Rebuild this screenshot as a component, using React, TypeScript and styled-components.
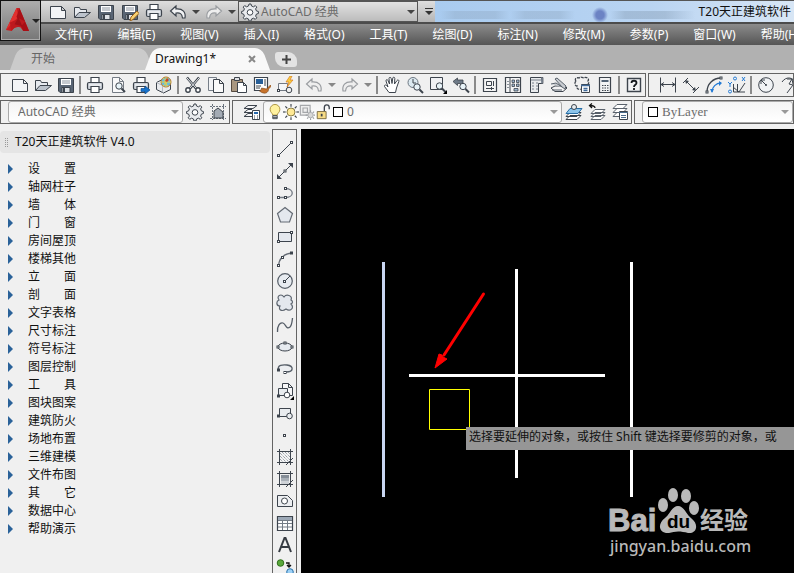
import React, { ReactNode } from 'react';
import styled, { createGlobalStyle } from 'styled-components';

const GlobalStyle = createGlobalStyle`
  * { box-sizing: border-box; }
  html, body, #root { margin: 0; height: 100%; }
  body { overflow: hidden; background: #f0f0f0; }
  body, button, select { font: 12px/18px "Noto Sans", "Noto Sans CJK SC", sans-serif; color: #111; }
  button { border: 0; padding: 0; background: none; }
`;

/* ---------- icons, all on an 18 unit grid ---------- */
const D = '#3d444d';
const F = '#e6e9ee';

const floppy = (
  <>
    <path d="M1.500 2.500h15v14H3l-1.500-1.500z" fill="#596574" stroke={D} />
    <path d="M4 3h10v6H4z" fill="#fff" />
    <path d="M5 5h8M5 7h8" stroke="#8b949f" />
    <path d="M5 11.500h8v5H5z" fill="#dfe3e8" stroke={D} />
    <path d="M7 12v4" stroke={D} strokeWidth="2" />
  </>
);
const printer = (
  <>
    <path d="M5 6V1.500h8V6" fill="#fff" stroke={D} strokeWidth="1.200" />
    <rect x="1.500" y="6.500" width="15" height="7" rx="1.500" fill="#cfd4db" stroke={D} strokeWidth="1.200" />
    <path d="M5 10.500h8v6H5z" fill="#fff" stroke={D} strokeWidth="1.200" />
    <path d="M3 9h12" stroke="#fff" />
  </>
);
const lens = (x: number, y: number) => (
  <>
    <circle cx={x} cy={y} r="3.200" fill="#e8f3f8" stroke={D} />
    <path d={`M${x + 2.5} ${y + 2.5}l3.500 3.500`} stroke={D} strokeWidth="2" />
  </>
);
const undoShape = 'M7 3L1.500 8l5.500 5v-3c4-.5 6 .5 6.500 5h2.500c1-6-2-9.500-9-9z';
const node = (x: number, y: number) => (
  <rect x={x - 1} y={y - 1} width="2" height="2" fill="#fff" stroke={D} />
);
const turns = [0, 45, 90, 135, 180, 225, 270, 315];
const hatchFrame = 'M3.500 1v16M14.500 1v16M1 3.500h16M1 14.500h16';

const icons: Record<string, ReactNode> = {
  new: <path d="M1.500 3.500h11l4 4v8h-15zM12.500 3.500v4h4" fill="#f3f4f6" stroke={D} />,
  open: (
    <>
      <path d="M1.500 14.500v-10h5l1 2h6v3" fill={F} stroke={D} />
      <path d="M1.500 14.500L6 9.500h11.500l-6 5z" fill="#bcc3cc" stroke={D} />
    </>
  ),
  save: floppy,
  saveAs: (
    <>
      {floppy}
      <path d="M9 18l1-4 6-6 2 2.500-6 6z" fill="#f8d070" stroke="#9b6420" />
    </>
  ),
  print: printer,
  preview: (
    <>
      <path d="M3.500 1.500h7l4 4v11h-11zM10.500 1.500v4h4" fill="#f8f8f9" stroke="#747b84" />
      {lens(10, 10)}
    </>
  ),
  plot: (
    <>
      {printer}
      <path d="M9 12.500h4V10l5 4-5 4v-2.500H9z" fill="#1773cc" stroke="#0b4c92" strokeWidth=".7" />
    </>
  ),
  cube: (
    <>
      <path d="M1.500 6.500l6-3 8 4v6l-7 3.500-7-3.500z" fill="#e8eaed" stroke={D} />
      <path d="M1.500 6.500l6 3v7" fill="none" stroke="#b5bac1" />
      <circle cx="11" cy="6" r="5" fill="#64bce0" stroke="#c07a27" />
      <path d="M11 1v10M6 6h10M8 2c3 2 3 6 0 8M13 2c-3 2-3 6 0 8" stroke="#e9cf45" fill="none" />
      <path d="M12 2l2 2-2 2-2-1z" fill="#c9432a" />
    </>
  ),
  cut: (
    <>
      <path d="M3 1.500l9 11M15 1.500l-9 11" stroke={D} strokeWidth="2.500" />
      <path d="M3 2l9 10M15 2L6 12" stroke="#e8ebef" />
      <circle cx="4" cy="14" r="2.200" fill="#fff" stroke={D} strokeWidth="1.400" />
      <circle cx="14" cy="14" r="2.200" fill="#fff" stroke={D} strokeWidth="1.400" />
    </>
  ),
  copy: (
    <>
      <path d="M1.500 1.500h8v13h-8z" fill="#f2f3f5" stroke="#767e88" />
      <path d="M6.500 3.500h6l4 4v9h-10zM12.500 3.500v4h4" fill="#fafafa" stroke={D} />
    </>
  ),
  paste: (
    <>
      <path d="M1.500 3.500h11v12h-11z" fill="#a99780" stroke="#54493f" />
      <path d="M4.500 1.500h5v3h-5z" fill="#dedfe2" stroke={D} />
      <path d="M7.500 6.500h6l3 3v7h-9zM13.500 6.500v3h3" fill="#fff" stroke={D} />
    </>
  ),
  match: (
    <>
      <path d="M1.500 1.500h13v13h-13z" fill="#fff" stroke={D} strokeWidth="1.200" />
      <path d="M3 3h7v5H3z" fill="#285f98" />
      <path d="M12 3v7M3 10h5M3 12h4" stroke={D} />
      <path d="M17.500 9l-4 4-5-1c0 2-1 2-2 3 5 4 9 2 9-2l3-3z" fill="#c8732b" stroke="#754013" strokeWidth=".6" />
    </>
  ),
  block: (
    <>
      <path d="M2.500 7.500h9v7h-9z" fill="#f4f6f8" stroke="#727983" />
      {node(2.5, 14.5)}
      <circle cx="13" cy="14" r="2.800" fill="#eee" stroke={D} />
      <path d="M14 0l-4 6h3l-2 5 6-7h-3l2-4z" fill="#f8cf40" stroke="#d87a1e" strokeWidth=".7" />
    </>
  ),
  undo: <path d={undoShape} fill="#f1f2f4" stroke={D} strokeWidth="1.200" />,
  undoPale: <path d={undoShape} fill="#eee" stroke="#9a9da1" strokeWidth="1.200" />,
  redoPale: <path d={undoShape} transform="matrix(-1 0 0 1 18 0)" fill="#eee" stroke="#9a9da1" strokeWidth="1.200" />,
  pan: (
    <path
      d="M6 16.500l-4.500-6c-.5-1.500 1-2 2-1l1.500 1.500L3 5c-.3-1.500 1.500-2 2-.5L6.500 8 6 2.500c0-1.500 2-1.500 2.200 0L9 7.500l.8-5.500c.3-1.300 2-1 2 .4L11.500 8 14 4.500c.8-1.200 2.400-.4 1.800 1L13.500 12l-1 4.500z"
      fill="#fff"
      stroke={D}
    />
  ),
  zoom: (
    <>
      <circle cx="7" cy="6.500" r="5" fill="#dce9f0" stroke="#6e7882" />
      <path d="M7 3v4h3" fill="none" stroke={D} />
      {lens(11, 11)}
    </>
  ),
  zoomWin: (
    <>
      <path d="M1.500 1.500h12v12h-12z" fill="#f0f1f4" stroke={D} />
      {lens(10.5, 10)}
      <path d="M18 14v4h-4z" fill="#000" />
    </>
  ),
  zoomPrev: (
    <>
      <path d="M1 5.500L5.500 2v2H11v3.500H5.500v2z" fill="#6d7986" stroke={D} strokeWidth=".8" />
      {lens(11, 10.5)}
    </>
  ),
  props: (
    <>
      <path d="M2.500 2.500h13v13h-13z" fill="#f4f4f4" stroke={D} strokeWidth="1.200" />
      <path d="M5.500 5.500h5v4h-5zM12.500 5v5M5 12.500h8M10.500 11v3" fill="none" stroke={D} />
    </>
  ),
  center: (
    <>
      <path d="M1.500 1.500h15v15h-15z" fill="#f5f5f6" stroke={D} strokeWidth="1.200" />
      <path d="M6 2v14" stroke={D} />
      <path d="M3 5.500h2M3 8.500h2M3 11.500h2" stroke="#8b929b" />
      <path d="M8 4h2.500v2.500H8zM12.500 4H15v2.500h-2.500zM8 8h2.500v2.500H8zM12.500 8H15v2.500h-2.500zM10 12.500h4V15h-4z" fill="#9eb6d0" stroke={D} strokeWidth=".8" />
    </>
  ),
  palette: (
    <>
      <path d="M3.500 1.500h11v6h-3v9h-8z" fill="#e9ebed" stroke={D} />
      <path d="M4 4h10M5 7h2m2 0h2M5 10h2m2 0h2M5 13h2m2 0h2" stroke="#777f89" />
      <path d="M14.500 1.500H16v6h-2" fill="#909aa6" stroke={D} strokeWidth=".7" />
    </>
  ),
  sheet: (
    <>
      <path d="M1 12l4-2h10l2 2-4 3.500H5z" fill="#f3f3f4" stroke={D} />
      <path d="M1 8l5-1 6 4M5 3l2-1 9 8-1 3-3-2zM2 14h10" fill="#c8ccd1" stroke="#59626c" />
    </>
  ),
  markup: (
    <>
      <path d="M3 5c-2-2 1-4 3-3 2-2 4 0 5 0 2-2 6 1 4 3 1 1 1 2 0 3M3 5c-2 2-1 5 1 5-1 3 2 4 4 3" fill="none" stroke={D} strokeWidth="1.300" strokeDasharray="3 1" />
      <path d="M8.500 8.500h8v8h-8z" fill="#fff" stroke={D} />
      <path d="M8 9.500h9M10.500 12.500h4M10.500 14.500h4" stroke="#416b9b" strokeWidth="1.300" />
    </>
  ),
  calc: (
    <>
      <path d="M3.500 1.500h11v15h-11z" fill="#f2f3f4" stroke={D} strokeWidth="1.200" />
      <path d="M5.500 4h7v2h-7z" fill="#516173" />
      <path d="M6 9.500h1.500m1 0H10m1 0h1.500M6 12h1.500m1 0H10m1 0h1.500M6 14.500h1.500m1 0H10m1 0h1.500" stroke={D} strokeWidth="1.200" />
    </>
  ),
  help: (
    <>
      <path d="M2.500 2.500h13v13h-13z" fill="#f0f2f4" stroke={D} strokeWidth="1.400" />
      <path d="M6.500 7C6.500 4 11.500 4 11.500 7c0 2-2.500 1.500-2.500 4M9 12v2" fill="none" stroke="#15191e" strokeWidth="1.800" />
    </>
  ),
  dimLinear: (
    <path d="M1.500 1.500v15M16.500 1.500v15M2 8.500h14M5 6.500l-3 2 3 2M13 6.500l3 2-3 2" fill="none" stroke={D} />
  ),
  dimAligned: (
    <>
      <path d="M3.500 4.500l10 10M1 7l5-5M11 17l6-6" fill="none" stroke={D} />
      <path d="M3 4l4 1-3 3zM14 15l-4-1 3-3z" fill={D} />
    </>
  ),
  dimArc: (
    <>
      <path d="M2 16C2 8 8 2 16 2" fill="none" stroke={D} strokeWidth="1.300" />
      <path d="M7 16c0-5 4-9 9-9" fill="none" stroke="#247bd5" strokeWidth="1.300" />
      <path d="M5 13l2 4 2-4zM14 5l3 2-3 3z" fill="#247bd5" />
      {node(2, 16)}
      {node(16, 2)}
    </>
  ),
  ordinate: (
    <>
      <path d="M5.500 8v8H17M9.500 8v8M5 11l6 5 6-9" fill="none" stroke={D} />
      <circle cx="7" cy="2.500" r="1.500" fill="none" stroke="#247bd5" />
      <circle cx="2" cy="15.500" r="1.500" fill="none" stroke="#247bd5" />
      <path d="M14 1l3 4m0-4l-3 4M0 6l2 2 2-2M2 8v3" fill="none" stroke="#247bd5" />
    </>
  ),
  radius: (
    <>
      <circle cx="9" cy="9" r="7.300" fill="#f1f3f5" stroke={D} />
      <path d="M4 4l5 5M4 4v4M4 4h4" fill="none" stroke={D} />
      <circle cx="9" cy="9" r="1" fill={D} />
    </>
  ),
  jogged: <path d="M2 6c4-6 11-5 14 1M12 3l-3 5 4 1-6 8M7 3l5 0 1 5" fill="none" stroke={D} />,
  gear: (
    <g fill="#e9ebee" stroke={D}>
      <path d="M7.500 3l.5-2h2l.5 2 2 .8 1.800-1.200 1.500 1.500-1.200 1.800.8 2 2 .6v2l-2 .6-.8 2 1.200 1.700-1.500 1.500-1.800-1.100-2 .8-.5 2H8l-.5-2-2-.8-1.800 1.100-1.500-1.500 1.200-1.700-.8-2-2-.6v-2l2-.6.8-2-1.200-1.800 1.500-1.500 1.800 1.200z" />
      <circle cx="9" cy="9.400" r="2.800" fill="#fff" />
    </g>
  ),
  wcs: (
    <>
      <path d="M3.500 1v16M14.500 1v16M1 3.500h16M1 15.500h16" stroke="#68717c" strokeDasharray="2 1" />
      <path d="M5 15V8l4-3 5 4v6z" fill="#a3abb5" stroke={D} />
    </>
  ),
  layerProps: (
    <>
      <path d="M5 2.500h9l-4 3H1zM9 9.500H1l4-3h4M9 13.500H1l4-3h4" fill="#f7f7f8" stroke={D} />
      <path d="M9.500 7.500h7v9h-7z" fill="#fff" stroke={D} />
      <path d="M11 9h4v2h-4z" fill="#2869ad" />
      <path d="M11 13h1m2 0h1m-4 2h1m2 0h1" stroke={D} />
    </>
  ),
  layerCur: (
    <>
      <path d="M5 12.500h11l-4 4H1zM5 9.500h11l-4 4H1z" fill="#fff" stroke={D} />
      <path d="M5 5.500h12l-4 5H1z" fill="#8cc4ea" stroke="#266da5" />
      <circle cx="9" cy="4" r="2.500" fill="#e8edf1" stroke={D} />
    </>
  ),
  layerPrev: (
    <>
      <path d="M7 12.500h10l-4 4H3zM7 9.500h10l-4 4H3zM7 6.500h10l-4 4H3z" fill="#fff" stroke="#59616b" />
      <path d="M7 5c0-2-2-2.500-5-2.500M4 .5l-2.500 2L4 5" fill="none" stroke="#111" strokeWidth="1.300" />
    </>
  ),
  layerState: (
    <>
      <path d="M6 9.500h10l-4 4H2zM6 5.500h10l-4 4H2zM6 1.500h10l-4 4H2z" fill="#fff" stroke="#59616b" />
      <path d="M8.500 8.500h8v8h-8z" fill="#fff" stroke={D} />
      <path d="M8 9.500h9M10 12.500h5M10 14.500h5" stroke="#496b8c" strokeWidth="1.200" />
    </>
  ),
  bulb: (
    <>
      <path d="M6.500 12.500c0-2-3-3-3-6.500a5.500 5.500 0 0111 0c0 3.500-3 4.500-3 6.500z" fill="#fff2a0" stroke="#a68c36" />
      <path d="M6.500 13h5v3.500h-5zM6.500 15h5" fill="#d2d5d9" stroke={D} />
    </>
  ),
  sun: (
    <>
      {turns.map((a) => (
        <path key={a} d="M9 0v3" transform={`rotate(${a} 9 9)`} stroke={D} strokeWidth="1.300" />
      ))}
      <circle cx="9" cy="9" r="4.500" fill="#ffe995" stroke="#7b6f38" />
    </>
  ),
  vpFreeze: (
    <>
      <path d="M1.500 1.500h11v11h-11zM4.500 4.500h5v5h-5z" fill="#eee" stroke="#a5a7aa" strokeWidth="1.300" />
      {turns.map((a) => (
        <path key={a} d="M13 7v2" transform={`rotate(${a} 13 12.500)`} stroke="#999da0" strokeWidth="1.300" />
      ))}
      <circle cx="13" cy="12.500" r="3" fill="#d8d8d8" stroke="#a5a7aa" />
    </>
  ),
  lock: (
    <>
      <path d="M10.500 8V4c0-4 5.500-4 5.500 0v2" fill="none" stroke={D} strokeWidth="1.500" />
      <path d="M2.500 8.500h10v8h-10z" fill="#f7dc86" stroke="#74643b" />
      <path d="M7.500 11v3" stroke={D} strokeWidth="2" />
    </>
  ),
  line: <><path d="M2 16L16 2" stroke={D} />{node(2.5, 15.5)}{node(15.5, 2.5)}</>,
  xline: (
    <>
      <path d="M3 15L15 3" stroke={D} />
      <path d="M1 17v-5l5 5zM17 1v5l-5-5z" fill={D} />
      {node(9, 9)}
    </>
  ),
  pline: (
    <>
      <path d="M2.500 13.500h7c9 0 9-9 0-9" fill="none" stroke="#727983" strokeWidth="1.300" />
      {node(2.5, 13.5)}{node(9.5, 13.5)}{node(9.5, 4.5)}
    </>
  ),
  polygon: <path d="M9 1.500l7.500 6-3 8.500h-9l-3-8.500z" fill="#e4e8ee" stroke="#646b74" strokeWidth="1.200" />,
  rect: <><path d="M2.500 4.500h13v9h-13z" fill="#e4e8ee" stroke={D} />{node(2.5, 13.5)}{node(15.5, 4.5)}</>,
  arc: (
    <>
      <path d="M2.500 16C3 9 7 4 16 3" fill="none" stroke="#646b74" strokeWidth="1.300" />
      {node(2.5, 15.5)}{node(6.5, 7.5)}{node(15.5, 3)}
    </>
  ),
  circle: (
    <>
      <circle cx="9" cy="9" r="7.300" fill="#e7ebf0" stroke="#555d67" strokeWidth="1.200" />
      <path d="M9 9l5-5" stroke={D} />{node(8.5, 9.5)}
    </>
  ),
  cloud: (
    <path d="M3 6C0 2 5-1 8 3c2-3 9-2 7 3 2 1 2 3 0 4 4 4-1 8-5 5-4 3-8 1-6-3C0 12 0 7 3 6z" fill="#e4e8ee" stroke="#5e6670" strokeWidth="1.200" />
  ),
  spline: <path d="M1.500 16C1 10 4 6 7 7s3 7 7 4c2-2 2-5 2.500-9" fill="none" stroke="#555d67" strokeWidth="1.300" />,
  ellipse: <><ellipse cx="9" cy="9" rx="7" ry="4" fill="#e7ebf0" stroke={D} />{node(2, 9)}{node(16, 9)}{node(9, 5)}</>,
  ellArc: (
    <>
      <path d="M2.500 10C1 5 7 4.500 11 5c7 1 7 7-1 7" fill="#eceef1" stroke="#555d67" strokeWidth="1.300" />
      {node(2.5, 10)}{node(9, 12.5)}
    </>
  ),
  insert: (
    <>
      <path d="M6.500 7V1.500h6l4 4v8h-3zM12.500 1.500v4h4" fill="#f7f7f8" stroke={D} />
      <path d="M2.500 6.500h9v7h-9z" fill="#e9ecef" stroke={D} />
      {node(2.5, 14)}
      <circle cx="11" cy="13" r="2.800" fill="#fff" stroke={D} />
      <path d="M18 14v4h-4z" fill="#000" />
    </>
  ),
  make: (
    <>
      <path d="M3.500 4.500h11v8h-11z" fill="#e9ecef" stroke={D} />
      {node(2.5, 12)}
      <circle cx="13.500" cy="12" r="2.800" fill="#e9ecef" stroke={D} />
    </>
  ),
  point: node(8.5, 9.5),
  hatch: (
    <>
      <path d="M4 4h10v10H4z" fill="#f4f5f6" />
      <path d="M4 11l3 3M4 8l6 6M4 5l9 9M6 4l8 8M9 4l5 5M12 4l2 2" stroke="#747c86" strokeDasharray="1 1" />
      <path d={hatchFrame} stroke={D} />
      <path d="M10 17l7-7" stroke={D} />
    </>
  ),
  gradient: (
    <>
      <path d="M5 5h8v3H5z" fill="#868e98" />
      <path d="M5 8h8v3H5z" fill="#a9b0b8" />
      <path d="M5 11h8v3H5z" fill="#ced2d7" />
      <path d={hatchFrame} stroke={D} />
      <path d="M10 17l7-7" stroke={D} />
    </>
  ),
  region: (
    <>
      <path d="M1.500 3.500h10l5 5v6h-15z" fill="#eceef1" stroke={D} />
      <circle cx="8.500" cy="9" r="3" fill="#fff" stroke={D} />
    </>
  ),
  table: (
    <>
      <path d="M1.500 2.500h15v14h-15z" fill="#fff" stroke={D} strokeWidth="1.200" />
      <path d="M2 3h14v3H2z" fill="#9ca8b6" />
      <path d="M2 6.500h14M2 9.500h14M2 13h14M6.500 6v10M11.500 6v10" stroke="#747c86" />
    </>
  ),
  mtext: <path d="M3 16L8.500 2h1L15 16M5.500 11h7" fill="none" stroke="#363b42" strokeWidth="2" />,
  addSel: (
    <>
      <circle cx="4.500" cy="5" r="3.300" fill="#59a83b" stroke="#2f6f1c" />
      <path d="M10 5h3v4m-2-2l2 2 2-2" fill="none" stroke="#111" strokeWidth="1.300" />
      <circle cx="14" cy="14" r="3.300" fill="#9dd0f5" stroke="#2672ad" />
    </>
  ),
};

const Glyph = styled.svg<{ $size?: number }>`
  display: block;
  flex: none;
  width: ${(p) => p.$size ?? 18}px;
  height: ${(p) => p.$size ?? 18}px;
`;
const Icon = ({ name, size }: { name: string; size?: number }) => (
  <Glyph viewBox="0 0 18 18" $size={size} aria-hidden="true">{icons[name]}</Glyph>
);

const Caret = styled.span<{ $c?: string }>`
  flex: none;
  border: 4px solid transparent;
  border-top-color: ${(p) => p.$c ?? '#444'};
  border-bottom: 0;
`;

/* ---------- page ---------- */
const Page = styled.div`
  display: flex;
  flex-direction: column;
  height: 100vh;
  overflow: hidden;
`;
const Header = styled.header`
  display: flex;
  flex: none;
  height: 45px;
  background: linear-gradient(#8c8c8c 24px, #555 45px);
`;
const AppButton = styled.button`
  display: flex;
  align-items: center;
  flex: none;
  gap: 2px;
  width: 41px;
  height: 41px;
  padding-left: 4px;
  border: 1px solid #111;
  background: linear-gradient(#adadad, #777);
  box-shadow: inset 0 0 0 1px #aaa;
`;
const HeaderRows = styled.div`
  flex: 1;
  min-width: 0;
`;
const TitleBar = styled.div`
  display: flex;
  height: 24px;
  border-top: 1px solid #555;
  border-bottom: 2px solid #4c4c4c;
  background: #b9cfe7;
`;
const QuickAccess = styled.div`
  display: flex;
  align-items: center;
  flex: none;
  padding-left: 5px;
  background: linear-gradient(#dedede, #b5b5b5);
`;
const ToolButton = styled.button<{ $w?: number }>`
  display: flex;
  align-items: center;
  justify-content: center;
  flex: none;
  width: ${(p) => p.$w ?? 23}px;
  height: 22px;
`;
const QuickCombo = styled.div`
  display: flex;
  align-items: center;
  width: 180px;
  height: 21px;
  padding: 0 2px;
  border: 1px solid #555;
  background: linear-gradient(#e2e2e2, #bcbcbc);
`;
const Select = styled.select<{ $pad?: number }>`
  flex: 1;
  min-width: 0;
  height: 18px;
  padding: 0 ${(p) => p.$pad ?? 2}px;
  border: 0;
  outline: 0;
  appearance: none;
  background: none;
  color: #6b6b6b;
`;
const Glass = styled.div`
  display: flex;
  align-items: center;
  justify-content: flex-end;
  flex: 1;
  min-width: 0;
  overflow: hidden;
  background:
    radial-gradient(circle at 165px 14px, #6c83c4 4px, transparent 8px),
    linear-gradient(90deg, transparent 5px, #8fa8c266 20px 60px, transparent 75px, #8fa8c266 90px 125px, transparent 140px 175px, #8399b066 190px 230px, transparent 260px) 0 10px / 100% 8px no-repeat,
    linear-gradient(90deg, #a9cbef, #b9d4f2 60%, #d8e6f5);
`;
const Title = styled.h1`
  margin: 0;
  padding-right: 3px;
  font-size: 12px;
  font-weight: 400;
  line-height: 20px;
  white-space: nowrap;
`;
const MenuBar = styled.nav`
  display: flex;
  gap: 1px;
  height: 21px;
  padding-left: 2px;
  overflow: hidden;
`;
const MenuButton = styled.button`
  flex: none;
  padding: 0 12px;
  color: #fff;
  line-height: 21px;
`;
const Tabs = styled.div`
  display: flex;
  align-items: flex-end;
  flex: none;
  height: 25px;
  padding-left: 14px;
  background: #b1b1b1;
`;
const Tab = styled.button<{ $active?: boolean }>`
  position: relative;
  z-index: ${(p) => (p.$active ? 1 : 0)};
  display: flex;
  align-items: center;
  justify-content: space-between;
  width: ${(p) => (p.$active ? 117 : 135)}px;
  height: 22px;
  padding: ${(p) => (p.$active ? '0 10px 0 6px' : '0 17px')};
  color: ${(p) => (p.$active ? '#111' : '#666')};

  &::before, &::after {
    content: "";
    position: absolute;
    z-index: -1;
    top: 0;
    bottom: 0;
    background: ${(p) => (p.$active ? '#f8f8f8' : '#cbcbcb')};
  }
  &::before { left: 0; right: 40%; transform: skewX(-20deg); border-radius: 7px 0 0 0; }
  &::after { right: 0; left: 40%; transform: skewX(20deg); border-radius: 0 7px 0 0; }
`;
const AddTab = styled.button`
  display: flex;
  align-items: center;
  justify-content: center;
  width: 22px;
  height: 15px;
  margin: 0 0 3px 9px;
  border-radius: 3px 9px 3px 9px;
  background: #e3e3e3;
`;
const ToolRow = styled.div`
  display: flex;
  flex: none;
  gap: 2px;
  height: 24px;
  margin-top: 3px;
`;
const ToolGroup = styled.div<{ $grow?: boolean }>`
  display: flex;
  align-items: center;
  flex: ${(p) => (p.$grow ? '1 0 0' : 'none')};
  min-width: 0;
  padding-left: 7px;
  overflow: hidden;
  border: 1px solid #646464;
`;
const Separator = styled.span`
  flex: none;
  width: 2px;
  height: 18px;
  margin: 0 2px;
  background: #8a8a8a;
`;
const Combo = styled.div<{ $w?: number }>`
  display: flex;
  align-items: center;
  flex: ${(p) => (p.$w ? 'none' : '1')};
  width: ${(p) => (p.$w ? `${p.$w}px` : 'auto')};
  height: 22px;
  padding: 0 3px;
  border: 1px solid #a9a9a9;
  border-radius: 3px;
  background: linear-gradient(#f4f4f4, #fff);
`;
const ColorSelect = styled(Select)`
  font-family: "Liberation Serif", serif;
  font-size: 13px;
`;
const Swatch = styled.span`
  flex: none;
  width: 10px;
  height: 10px;
  margin: 0 2px;
  border: 1px solid #000;
  background: #fff;
`;
const Work = styled.div`
  display: flex;
  flex: 1;
  min-height: 0;
  margin-top: 5px;
`;
const Sidebar = styled.aside`
  width: 270px;
  flex: none;
  padding-top: 2px;
`;
const PanelTitle = styled.h2`
  display: flex;
  align-items: center;
  gap: 6px;
  height: 22px;
  margin: 0 0 7px;
  padding-left: 5px;
  border-radius: 4px;
  background: #e5e5e5;
  font-size: 12px;
  font-weight: 400;
`;
const Grip = styled.span`
  width: 4px;
  height: 10px;
  background: repeating-linear-gradient(#e5e5e5 0 1px, transparent 1px 2px), repeating-linear-gradient(90deg, #999 0 1px, transparent 1px 2px);
`;
const Tree = styled.ul`
  margin: 0;
  padding: 0;
  list-style: none;
`;
const TreeButton = styled.button`
  display: flex;
  align-items: center;
  gap: 15px;
  width: 100%;
  height: 18px;
  padding-left: 8px;
  text-align: left;

  &::before {
    content: "";
    border: 5px solid transparent;
    border-left-color: #2a6299;
    border-right-width: 0;
  }
`;
const DrawTools = styled.div`
  flex: none;
  width: 25px;
  margin: 0 4px 0 2px;
  padding-top: 8px;
  overflow: hidden;
  border: 1px solid #646464;
  border-bottom: 0;
`;
const Canvas = styled.main`
  position: relative;
  flex: 1;
  min-width: 0;
  overflow: hidden;
  background: #000;
`;
const Drawing = styled.svg`
  display: block;
  width: 493px;
  height: 444px;
`;
const Prompt = styled.div`
  position: absolute;
  top: 298px;
  left: 165px;
  right: 0;
  height: 23px;
  padding-left: 3px;
  overflow: hidden;
  background: #969696;
  line-height: 20px;
  white-space: nowrap;
`;
const Watermark = styled.svg`
  position: absolute;
  right: 40px;
  bottom: 9px;
  width: 148px;
  height: 76px;
`;

const mainTools = [
  'new', 'open', 'save', '|', 'print', 'preview', 'plot', 'cube', '|', 'cut', 'copy', 'paste', 'match', 'block', '|',
  'undoPale', 'v', 'redoPale', 'v', '|', 'pan', 'zoom', 'zoomWin', 'zoomPrev', '|',
  'props', 'center', 'palette', 'sheet', 'markup', 'calc', '|', 'help',
];
const dimTools = ['dimLinear', 'dimAligned', 'dimArc', 'ordinate', '|', 'radius', 'jogged'];
const quickTools = ['new', 'open', 'save', 'saveAs', 'print', 'undo', 'v', 'redoPale', 'v'];
const drawTools = [
  'line', 'xline', 'pline', 'polygon', 'rect', 'arc', 'circle', 'cloud', 'spline', 'ellipse', 'ellArc',
  'insert', 'make', 'point', 'hatch', 'gradient', 'region', 'table', 'mtext', 'addSel',
];
const menus = [
  '文件(F)', '编辑(E)', '视图(V)', '插入(I)', '格式(O)', '工具(T)', '绘图(D)', '标注(N)', '修改(M)', '参数(P)', '窗口(W)', '帮助(H)',
];
const tree = [
  '设　　置', '轴网柱子', '墙　　体', '门　　窗', '房间屋顶', '楼梯其他', '立　　面', '剖　　面', '文字表格', '尺寸标注', '符号标注',
  '图层控制', '工　　具', '图块图案', '建筑防火', '场地布置', '三维建模', '文件布图', '其　　它', '数据中心', '帮助演示',
];

const Tools = ({ items, w, pale }: { items: string[]; w?: number; pale?: boolean }) => (
  <>
    {items.map((t, i) => {
      if (t === '|') return <Separator key={i} />;
      if (t === 'v') {
        return (
          <ToolButton key={i} $w={pale ? 13 : 12} aria-label={`${items[i - 1]} list`}>
            <Caret $c={pale ? '#888' : '#444'} />
          </ToolButton>
        );
      }
      return (
        <ToolButton key={i} $w={w} aria-label={t}>
          <Icon name={t} />
        </ToolButton>
      );
    })}
  </>
);

export default function App() {
  return (
    <Page>
      <GlobalStyle />
      <Header>
        <AppButton aria-label="AutoCAD">
          <Glyph viewBox="0 0 24 26" $size={25} aria-hidden="true">
            <path d="M11 0h3l10 24h-6l-3-4c-4-1-7 0-9 4l-6-1z" fill="#c71e20" />
            <path d="M11 0l2 9L0 23z" fill="#e2302f" />
            <path d="M14 0l10 24h-6L11 9z" fill="#a80f16" />
            <path d="M4 15l10-4 6 3-5 6c-4-1-7 0-9 4z" fill="#bd191e" />
            <path d="M9 17l4-7 4 9z" fill="#9e1117" />
          </Glyph>
          <Caret $c="#222" />
        </AppButton>
        <HeaderRows>
          <TitleBar>
            <QuickAccess>
              <Tools items={quickTools} w={24} />
            </QuickAccess>
            <QuickCombo>
              <Icon name="gear" />
              <Select aria-label="工作空间"><option>AutoCAD 经典</option></Select>
              <Caret />
            </QuickCombo>
            <QuickAccess as="span">
              <ToolButton $w={12} aria-label="自定义快速访问工具栏">
                <svg width="10" height="10" aria-hidden="true"><path d="M1 1.500h8" stroke="#333" /><path d="M1 4h8L5 8z" fill="#333" /></svg>
              </ToolButton>
            </QuickAccess>
            <Glass><Title>T20天正建筑软件</Title></Glass>
          </TitleBar>
          <MenuBar>
            {menus.map((m) => <MenuButton key={m}>{m}</MenuButton>)}
          </MenuBar>
        </HeaderRows>
      </Header>
      <Tabs>
        <Tab>开始</Tab>
        <Tab $active>
          Drawing1*
          <svg width="8" height="8" aria-hidden="true"><path d="M1 1l6 6M7 1L1 7" stroke="#888" strokeWidth="2" /></svg>
        </Tab>
        <AddTab aria-label="新图形">
          <svg width="9" height="9" aria-hidden="true"><path d="M4.500 0v9M0 4.500h9" stroke="#444" strokeWidth="2" /></svg>
        </AddTab>
      </Tabs>
      <ToolRow>
        <ToolGroup><Tools items={mainTools} pale /></ToolGroup>
        <ToolGroup $grow><Tools items={dimTools} /></ToolGroup>
      </ToolRow>
      <ToolRow>
        <ToolGroup>
          <Combo $w={175}>
            <Select $pad={6} aria-label="工作空间切换"><option>AutoCAD 经典</option></Select>
            <Caret $c="#999" />
          </Combo>
          <Tools items={['gear', 'wcs']} />
        </ToolGroup>
        <ToolGroup>
          <Tools items={['layerProps']} />
          <Combo $w={299}>
            {['bulb', 'sun', 'vpFreeze', 'lock'].map((n) => <Icon key={n} name={n} size={16} />)}
            <Swatch />
            <Select aria-label="图层"><option>0</option></Select>
            <Caret $c="#999" />
          </Combo>
          <Tools items={['layerCur', 'layerPrev', 'layerState']} />
        </ToolGroup>
        <ToolGroup $grow>
          <Combo>
            <Swatch />
            <ColorSelect aria-label="颜色"><option>ByLayer</option></ColorSelect>
            <Caret $c="#999" />
          </Combo>
        </ToolGroup>
      </ToolRow>
      <Work>
        <Sidebar>
          <PanelTitle><Grip />T20天正建筑软件 V4.0</PanelTitle>
          <Tree>
            {tree.map((t) => <li key={t}><TreeButton>{t}</TreeButton></li>)}
          </Tree>
        </Sidebar>
        <DrawTools>
          {drawTools.map((t) => (
            <ToolButton key={t} aria-label={t}><Icon name={t} /></ToolButton>
          ))}
        </DrawTools>
        <Canvas>
          <Drawing viewBox="0 0 493 444" aria-label="图形">
            <path d="M82.500 133v235" stroke="#c9d6f2" strokeWidth="3" />
            <path d="M215.500 140v209M330.500 133v235M108 246.500h196" stroke="#fff" strokeWidth="3" />
            <path d="M182.500 165L143 226" stroke="#f00" strokeWidth="3" strokeLinecap="round" />
            <path d="M134 239l4-14 3 1 1 2 4 2z" fill="#f00" stroke="#f00" />
            <path d="M128.500 260.500h40v40h-40z" fill="none" stroke="#ff0" />
          </Drawing>
          <Prompt>选择要延伸的对象，或按住 Shift 键选择要修剪的对象，或</Prompt>
          <Watermark viewBox="0 0 148 76" fill="#b9b9b9" aria-label="Baidu 经验">
            <text x="2" y="43" fontFamily="Liberation Sans" fontWeight="700" fontSize="31" stroke="#b9b9b9">Bai</text>
            <ellipse cx="57" cy="17" rx="5" ry="7" />
            <ellipse cx="67" cy="7" rx="5" ry="7" />
            <ellipse cx="80" cy="8" rx="5" ry="7" />
            <ellipse cx="88" cy="20" rx="5" ry="7" />
            <path d="M72 18c6 0 8 8 13 12 9 7 5 16-3 15-7-2-13-2-19 0-9 1-13-8-4-15 5-4 7-12 13-12z" />
            <text x="61" y="40" fill="#000" fontFamily="Liberation Sans" fontWeight="700" fontSize="19">du</text>
            <text x="94" y="41" fontFamily="Liberation Sans, Noto Sans CJK SC" fontWeight="700" fontSize="24">经验</text>
            <text x="4" y="64" fontFamily="Noto Sans" fontWeight="500" fontSize="16">jingyan.baidu.com</text>
          </Watermark>
        </Canvas>
      </Work>
    </Page>
  );
}
